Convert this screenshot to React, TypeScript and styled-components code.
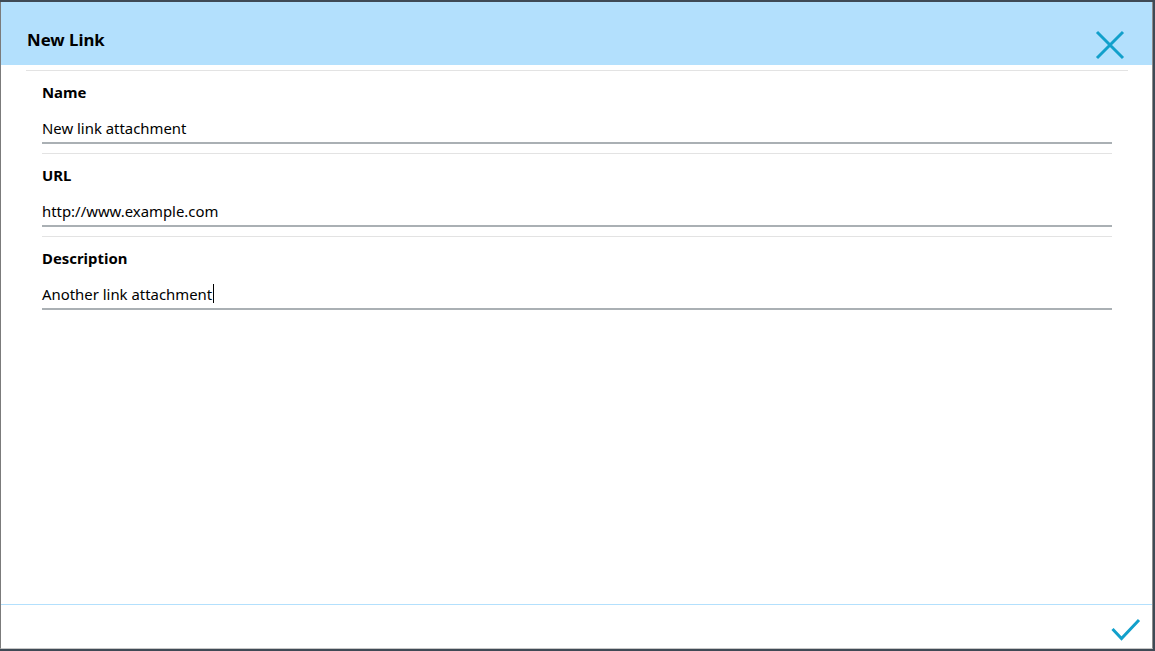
import React from "react";
import styled, { createGlobalStyle } from "styled-components";

const Global = createGlobalStyle`
  html, body { margin: 0; padding: 0; }
  body {
    background: #3f4a55;
    font-family: "Noto Sans", "Open Sans", sans-serif;
    color: #000;
  }
  #root { height: 651px; }
`;

const Page = styled.div`
  box-sizing: border-box;
  height: 651px;
  width: 1155px;
  padding: 2px 2px 2px 0;
  display: flex;
`;

const Dialog = styled.div`
  flex: 1;
  display: flex;
  flex-direction: column;
  background: #fff;
  border-left: 1px solid #7b7b7b;
  border-right: 1px solid #8c8c8c;
  border-bottom: 1px solid #c6c6c6;
`;

const Header = styled.div`
  height: 63px;
  background: #b3e0fd;
  display: flex;
  align-items: center;
  justify-content: space-between;
  padding: 0 27px 0 26px;
  flex-shrink: 0;
`;

const Title = styled.h1`
  margin: 0;
  padding-top: 12px;
  font-size: 16.8px;
  font-weight: 700;
`;

const IconButton = styled.button<{ $offset?: number }>`
  border: 0;
  background: transparent;
  padding: 0;
  margin-top: ${(p) => p.$offset ?? 0}px;
  width: 30px;
  height: 30px;
  display: flex;
  align-items: center;
  justify-content: center;
  cursor: pointer;
`;

const Body = styled.div`
  flex: 1;
  display: flex;
  flex-direction: column;
  padding: 5px 24px 0 25px;
`;

const TopRule = styled.hr`
  margin: 0;
  border: 0;
  height: 1px;
  background: #e3e3e3;
`;

const Fields = styled.div`
  display: flex;
  flex-direction: column;
  padding: 0 16px 0 16px;
`;

const Field = styled.div<{ $last?: boolean }>`
  padding-top: 11px;
  padding-bottom: ${(p) => (p.$last ? 0 : 9)}px;
  border-bottom: ${(p) => (p.$last ? "none" : "1px solid #e3e3e3")};
`;

const Label = styled.div`
  font-size: 14.9px;
  font-weight: 700;
  line-height: 20px;
`;

const Input = styled.div`
  margin-top: 13px;
  height: 29px;
  padding-bottom: 2px;
  box-sizing: border-box;
  display: flex;
  align-items: center;
  font-size: 14.9px;
  border-bottom: 2px solid #aab0b4;
`;

const Caret = styled.span`
  display: inline-block;
  width: 1px;
  height: 19px;
  background: #000;
  margin-left: 1px;
`;

const Footer = styled.div`
  height: 43px;
  flex-shrink: 0;
  border-top: 1px solid #b3e0fd;
  display: flex;
  align-items: center;
  justify-content: flex-end;
  padding-right: 11px;
`;

const CloseIcon = () => (
  <svg width="30" height="30" viewBox="0 0 30 30">
    <path d="M2 2 L28 28 M28 2 L2 28" stroke="#12a0cb" strokeWidth="3" fill="none" />
  </svg>
);

const CheckIcon = () => (
  <svg width="30" height="24" viewBox="0 0 30 24">
    <path d="M1.5 12 L10.5 21.5 L28 3" stroke="#12a0cb" strokeWidth="3" fill="none" />
  </svg>
);

const fields = [
  { label: "Name", value: "New link attachment" },
  { label: "URL", value: "http://www.example.com" },
  { label: "Description", value: "Another link attachment", focused: true },
];

export default function App() {
  return (
    <>
      <Global />
      <Page>
        <Dialog>
          <Header>
            <Title>New Link</Title>
            <IconButton aria-label="Close" $offset={22}>
              <CloseIcon />
            </IconButton>
          </Header>
          <Body>
            <TopRule />
            <Fields>
              {fields.map((f, i) => (
                <Field key={f.label} $last={i === fields.length - 1}>
                  <Label>{f.label}</Label>
                  <Input>
                    {f.value}
                    {f.focused && <Caret />}
                  </Input>
                </Field>
              ))}
            </Fields>
          </Body>
          <Footer>
            <IconButton aria-label="Save" $offset={4}>
              <CheckIcon />
            </IconButton>
          </Footer>
        </Dialog>
      </Page>
    </>
  );
}
